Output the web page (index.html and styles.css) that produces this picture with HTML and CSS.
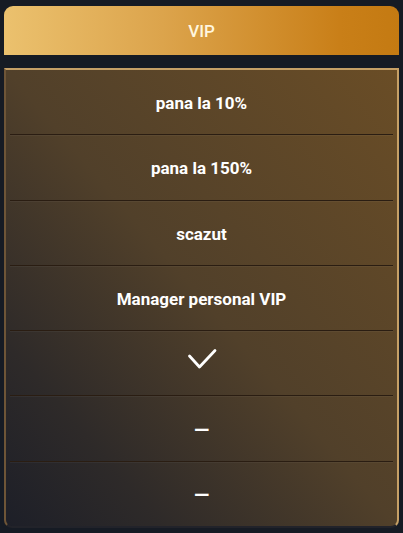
FILE: index.html
```html
<!DOCTYPE html>
<html>
<head>
<meta charset="utf-8">
<link rel="stylesheet" href="styles.css">
</head>
<body>
<div class="wrap">
  <div class="head">VIP</div>
  <div class="card">
    <div class="row">pana la 10%</div>
    <div class="row">pana la 150%</div>
    <div class="row">scazut</div>
    <div class="row">Manager personal VIP</div>
    <div class="row">
      <svg class="check" width="30" height="22" viewBox="0 0 30 22"><path d="M2.5 8 L12.5 19 L28 2.5" fill="none" stroke="#fff" stroke-width="2.8" stroke-linecap="round" stroke-linejoin="round"/></svg>
    </div>
    <div class="row"><span class="dash">—</span></div>
    <div class="row last"><span class="dash">—</span></div>
  </div>
</div>
</body>
</html>
```
FILE: styles.css
```css
html, body {
  margin: 0;
  padding: 0;
  background: #161b24;
}
.wrap {
  width: 403px;
  height: 533px;
  box-sizing: border-box;
  padding: 6px 4px 5px 4px;
  display: flex;
  flex-direction: column;
  font-family: Roboto, "Noto Sans", sans-serif;
}
.head {
  height: 49px;
  border-radius: 9px 9px 0 0;
  background: linear-gradient(90deg, #ebc16e 0%, #dca44c 40%, #c97f18 85%, #c47a12 100%);
  color: #fff6df;
  font-size: 17px;
  font-weight: 500;
  display: flex;
  align-items: center;
  justify-content: center;
  flex: none;
}
.card {
  margin-top: 13px;
  flex: 1;
  border: 2px solid;
  border-color: #c6a066 #c6a066 #22232a #6e5537;
  border-radius: 0 0 8px 8px;
  background: linear-gradient(to top right, #1d1f28 0%, #2e2a29 20%, #51402a 50%, #6a4d26 100%);
  display: flex;
  flex-direction: column;
}
.row {
  flex: 1;
  margin: 0 4px;
  border-bottom: 1px solid #2a1d12;
  box-shadow: 0 1px 0 rgba(255,255,255,0.04);
  display: flex;
  align-items: center;
  justify-content: center;
  color: #fff;
  font-size: 17px;
  font-weight: 700;
  padding-top: 2px;
}
.row.last {
  border-bottom: none;
  box-shadow: none;
}
.check {
  display: block;
  margin-bottom: 11px;
}
.dash {
  font-size: 20px;
  font-weight: 700;
}
```
